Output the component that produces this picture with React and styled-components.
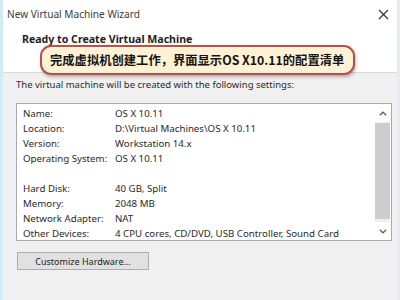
import React from "react";
import styled, { createGlobalStyle } from "styled-components";

const Global = createGlobalStyle`
  html, body { margin: 0; padding: 0; background: #ffffff; }
  body { font-family: "Noto Sans", "Open Sans", sans-serif; }
  * { box-sizing: border-box; }
`;

const Window = styled.div`
  width: 400px;
  height: 300px;
  display: flex;
  flex-direction: column;
  border-left: 3px solid #d6eaf5;
  border-right: 3px solid #e4edf4;
  background: #f0f0f0;
  overflow: hidden;
`;

const TitleBar = styled.div`
  height: 28px;
  flex: none;
  background: #ffffff;
  display: flex;
  align-items: center;
  justify-content: space-between;
  padding: 0 8px 0 4px;
`;

const Title = styled.div`
  font-size: 10.1px;
  color: #3c3c3c;
`;

const Close = styled.svg`
  width: 11px;
  height: 11px;
  display: block;
`;

const Header = styled.div`
  position: relative;
  height: 45px;
  flex: none;
  background: #ffffff;
  border-bottom: 1px solid #d9d9d9;
  padding: 5px 0 0 19px;
`;

const Heading = styled.div`
  font-size: 10.6px;
  font-weight: 700;
  color: #1e1e1e;
  line-height: 12px;
`;

const Callout = styled.div`
  position: absolute;
  left: 37px;
  top: 17px;
  width: 315px;
  height: 30px;
  border: 2px solid #b4534d;
  border-radius: 11px;
  background: #fff2d4;
  box-shadow: 1px 2px 3px rgba(90, 40, 30, 0.35);
  display: flex;
  align-items: center;
  padding-left: 8px;
  font-family: "Noto Sans CJK SC", "Noto Sans", sans-serif;
  font-weight: 700;
  font-size: 12.3px;
  color: #141414;
  white-space: nowrap;
`;

const Body = styled.div`
  flex: 1;
  display: flex;
  flex-direction: column;
  align-items: flex-start;
  padding: 6px 5px 0 13px;
`;

const Intro = styled.div`
  font-size: 9.5px;
  line-height: 12px;
  color: #2a2a2a;
`;

const ListBox = styled.div`
  margin-top: 12px;
  width: 100%;
  height: 138px;
  background: #ffffff;
  border: 1px solid #a9a9a9;
  display: flex;
`;

const Rows = styled.div`
  flex: 1;
  padding: 2px 0 0 6px;
`;

const Row = styled.div`
  display: flex;
  height: 15px;
  align-items: center;
  font-size: 9.7px;
  color: #2a2a2a;
`;

const Label = styled.div`
  width: 92px;
  flex: none;
`;

const Value = styled.div`
  white-space: nowrap;
`;

const ScrollBar = styled.div`
  width: 15px;
  margin-right: 1px;
  flex: none;
  display: flex;
  flex-direction: column;
  background: #f0f0f0;
`;

const Arrow = styled.div`
  height: 18px;
  flex: none;
  display: flex;
  align-items: center;
  justify-content: center;
  background: #ffffff;
`;

const Thumb = styled.div`
  margin-top: 1px;
  height: 96px;
  background: #cdcdcd;
`;

const Track = styled.div`
  flex: 1;
`;

const Button = styled.div`
  margin-top: 11px;
  margin-left: 1px;
  width: 132px;
  height: 18px;
  background: #e1e1e1;
  border: 1px solid #adadad;
  display: flex;
  align-items: center;
  justify-content: center;
  font-size: 9px;
  color: #222;
`;

const rows = [
  ["Name:", "OS X 10.11"],
  ["Location:", "D:\\Virtual Machines\\OS X 10.11"],
  ["Version:", "Workstation 14.x"],
  ["Operating System:", "OS X 10.11"],
  ["", ""],
  ["Hard Disk:", "40 GB, Split"],
  ["Memory:", "2048 MB"],
  ["Network Adapter:", "NAT"],
  ["Other Devices:", "4 CPU cores, CD/DVD, USB Controller, Sound Card"],
];

const Chevron = ({ up }) => (
  <svg width="8" height="5" viewBox="0 0 8 5">
    <path
      d={up ? "M0.8 4.3 L4 1.2 L7.2 4.3" : "M0.8 0.8 L4 3.8 L7.2 0.8"}
      fill="none"
      stroke="#606060"
      strokeWidth="1.3"
    />
  </svg>
);

export default function App() {
  return (
    <>
      <Global />
      <Window>
        <TitleBar>
          <Title>New Virtual Machine Wizard</Title>
          <Close viewBox="0 0 11 11">
            <path d="M1 1 L10 10 M10 1 L1 10" stroke="#333" strokeWidth="1.2" />
          </Close>
        </TitleBar>
        <Header>
          <Heading>Ready to Create Virtual Machine</Heading>
          <Callout>完成虚拟机创建工作，界面显示OS X10.11的配置清单</Callout>
        </Header>
        <Body>
          <Intro>The virtual machine will be created with the following settings:</Intro>
          <ListBox>
            <Rows>
              {rows.map(([l, v], i) => (
                <Row key={i}>
                  <Label>{l}</Label>
                  <Value>{v}</Value>
                </Row>
              ))}
            </Rows>
            <ScrollBar>
              <Arrow>
                <Chevron up />
              </Arrow>
              <Thumb />
              <Track />
              <Arrow>
                <Chevron />
              </Arrow>
            </ScrollBar>
          </ListBox>
          <Button>Customize Hardware...</Button>
        </Body>
      </Window>
    </>
  );
}
